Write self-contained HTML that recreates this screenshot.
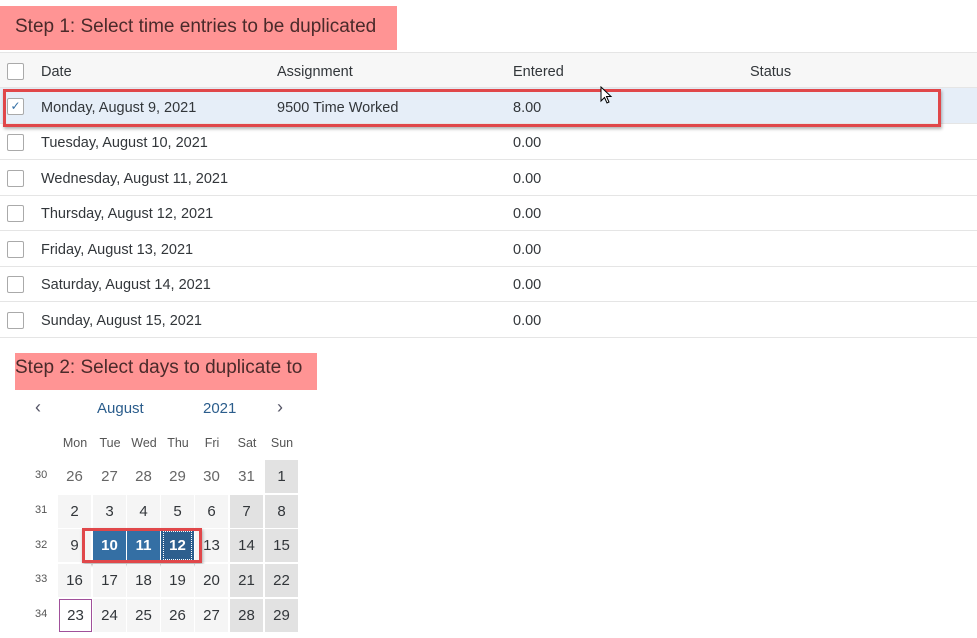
<!DOCTYPE html>
<html><head><style>
*{margin:0;padding:0;box-sizing:border-box}
body{width:977px;height:638px;background:#fff;font-family:"Liberation Sans",Arial,sans-serif;position:relative;overflow:hidden;color:#32363a}
.a{position:absolute}
.lbl{background:#ff9494;color:#4a2a2a;font-size:19px;line-height:1}
.row{position:absolute;left:0;width:977px;height:36px;border-bottom:1px solid #e5e5e5;font-size:14.5px}
.row span{position:absolute;top:11px}
.cb{position:absolute;left:7px;top:10px;width:17px;height:17px;border:1px solid #aaa;background:#fff;border-radius:2px}
.c{position:absolute;width:33px;height:33px;text-align:center;line-height:33px;font-size:15px;color:#32363a}
.wk{background:#f5f5f5}.we{background:#e2e2e2}.sel{background:#346fa4;color:#fff;font-weight:bold}
.wn{position:absolute;left:35px;font-size:11px;color:#555}
.dh{position:absolute;top:436px;font-size:12.5px;color:#555;width:34px;text-align:center}
</style></head><body>
<div class="a lbl" style="left:0;top:6px;width:397px;height:44px;padding:11px 0 0 15px">Step 1: Select time entries to be duplicated</div>
<div class="row" style="top:52px;background:#f7f7f7;border-top:1px solid #e5e5e5"><div class="cb"></div><span style="left:41px">Date</span><span style="left:277px">Assignment</span><span style="left:513px">Entered</span><span style="left:750px">Status</span></div>
<div class="row" style="top:88px;background:#e6eef8"><div class="cb" style="color:#346fa4;font-size:12px;line-height:15px;text-align:center">✓</div><span style="left:41px;top:12px">Monday, August 9, 2021</span><span style="left:277px;top:12px">9500 Time Worked</span><span style="left:513px;top:12px">8.00</span></div>
<div class="a" style="left:3px;top:89px;width:938px;height:38px;border:3px solid #e0474a;box-shadow:1px 2px 3px rgba(0,0,0,.3)"></div>
<div class="row" style="top:124px"><div class="cb"></div><span style="left:41px">Tuesday, August 10, 2021</span><span style="left:513px">0.00</span></div>
<div class="row" style="top:160px"><div class="cb"></div><span style="left:41px">Wednesday, August 11, 2021</span><span style="left:513px">0.00</span></div>
<div class="row" style="top:195px"><div class="cb"></div><span style="left:41px">Thursday, August 12, 2021</span><span style="left:513px">0.00</span></div>
<div class="row" style="top:231px"><div class="cb"></div><span style="left:41px">Friday, August 13, 2021</span><span style="left:513px">0.00</span></div>
<div class="row" style="top:266px"><div class="cb"></div><span style="left:41px">Saturday, August 14, 2021</span><span style="left:513px">0.00</span></div>
<div class="row" style="top:302px"><div class="cb"></div><span style="left:41px">Sunday, August 15, 2021</span><span style="left:513px">0.00</span></div>
<svg class="a" style="left:600px;top:86px" width="14" height="20"><path d="M1 1 L1 15 L4.5 11.5 L7 17 L9 16 L6.5 10.5 L11 10.5 Z" fill="#fff" stroke="#000" stroke-width="1"/></svg>
<div class="a lbl" style="left:15px;top:353px;width:302px;height:37px;padding:5px 0 0 0">Step 2: Select days to duplicate to</div>
<div class="a" style="left:35px;top:397px;font-size:18px;color:#556">‹</div>
<div class="a" style="left:97px;top:400px;font-size:15px;color:#2b5d8c">August</div>
<div class="a" style="left:203px;top:400px;font-size:15px;color:#2b5d8c">2021</div>
<div class="a" style="left:277px;top:397px;font-size:18px;color:#556">›</div>
<div class="dh" style="left:58px">Mon</div><div class="dh" style="left:93px">Tue</div><div class="dh" style="left:127px">Wed</div><div class="dh" style="left:161px">Thu</div><div class="dh" style="left:195px">Fri</div><div class="dh" style="left:230px">Sat</div><div class="dh" style="left:265px">Sun</div>
<div class="wn" style="top:469px">30</div><div class="wn" style="top:504px">31</div><div class="wn" style="top:539px">32</div><div class="wn" style="top:573px">33</div><div class="wn" style="top:608px">34</div>
<div class="c" style="left:58px;top:460px;color:#666">26</div><div class="c" style="left:93px;top:460px;color:#666">27</div><div class="c" style="left:127px;top:460px;color:#666">28</div><div class="c" style="left:161px;top:460px;color:#666">29</div><div class="c" style="left:195px;top:460px;color:#666">30</div><div class="c" style="left:230px;top:460px;color:#666">31</div><div class="c we" style="left:265px;top:460px">1</div>
<div class="c wk" style="left:58px;top:495px">2</div><div class="c wk" style="left:93px;top:495px">3</div><div class="c wk" style="left:127px;top:495px">4</div><div class="c wk" style="left:161px;top:495px">5</div><div class="c wk" style="left:195px;top:495px">6</div><div class="c we" style="left:230px;top:495px">7</div><div class="c we" style="left:265px;top:495px">8</div>
<div class="c wk" style="left:58px;top:529px">9</div><div class="c sel" style="left:93px;top:529px">10</div><div class="c sel" style="left:127px;top:529px">11</div><div class="c sel" style="left:161px;top:529px;background:#2d5f8e;outline:1px dotted #fff;outline-offset:-3px">12</div><div class="c wk" style="left:195px;top:529px">13</div><div class="c we" style="left:230px;top:529px">14</div><div class="c we" style="left:265px;top:529px">15</div>
<div class="a" style="left:82px;top:528px;width:120px;height:35px;border:3px solid #e0474a;box-shadow:1px 2px 3px rgba(0,0,0,.3)"></div>
<div class="c wk" style="left:58px;top:564px">16</div><div class="c wk" style="left:93px;top:564px">17</div><div class="c wk" style="left:127px;top:564px">18</div><div class="c wk" style="left:161px;top:564px">19</div><div class="c wk" style="left:195px;top:564px">20</div><div class="c we" style="left:230px;top:564px">21</div><div class="c we" style="left:265px;top:564px">22</div>
<div class="c" style="left:59px;top:599px;border:1px solid #a0509a;line-height:31px">23</div><div class="c wk" style="left:93px;top:599px">24</div><div class="c wk" style="left:127px;top:599px">25</div><div class="c wk" style="left:161px;top:599px">26</div><div class="c wk" style="left:195px;top:599px">27</div><div class="c we" style="left:230px;top:599px">28</div><div class="c we" style="left:265px;top:599px">29</div>
</body></html>
